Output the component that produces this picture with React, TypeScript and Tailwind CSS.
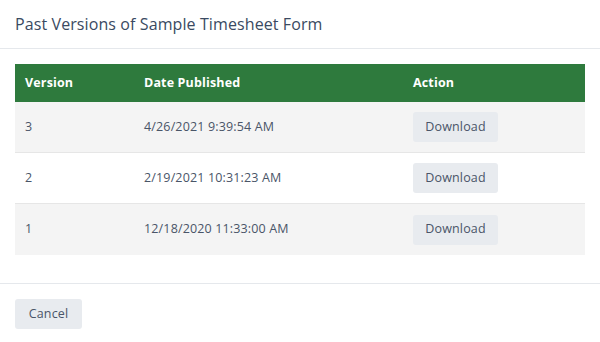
import React from "react";

const rows = [
  { v: "3", d: "4/26/2021 9:39:54 AM", gray: true },
  { v: "2", d: "2/19/2021 10:31:23 AM", gray: false },
  { v: "1", d: "12/18/2020 11:33:00 AM", gray: true },
];

export default function App() {
  return (
    <div
      className="w-[600px] h-[342px] bg-white text-[#4a5568] flex flex-col"
      style={{ fontFamily: "'Open Sans', 'Liberation Sans', sans-serif" }}
    >
      <div className="h-[49px] border-b border-[#e5e8ec] px-[15px] flex items-center">
        <h2 className="text-[16px] text-[#3a4a62] tracking-[0.1px]">Past Versions of Sample Timesheet Form</h2>
      </div>
      <div className="px-[15px] pt-[15px] h-[234px]">
        <div className="flex flex-col text-[12.5px] tracking-[0.15px]">
          <div className="h-[38px] bg-[#2e7a3d] text-white font-bold flex items-center">
            <div className="w-[129px] pl-[10px]">Version</div>
            <div className="w-[269px]">Date Published</div>
            <div>Action</div>
          </div>
          {rows.map((r, i) => (
            <div
              key={r.v}
              className={`h-[51px] flex items-center ${r.gray ? "bg-[#f4f4f4]" : "bg-white"} ${i < 2 ? "border-b border-[#e6e6e6]" : ""}`}
            >
              <div className="w-[129px] pl-[10px]">{r.v}</div>
              <div className="w-[269px]">{r.d}</div>
              <div>
                <button className="h-[30px] w-[85px] rounded-[3px] bg-[#e8ebef] text-[12.5px] text-[#4a5568]">
                  Download
                </button>
              </div>
            </div>
          ))}
        </div>
      </div>
      <div className="border-t border-[#e5e8ec] px-[15px] pt-[15px]">
        <button className="h-[30px] w-[67px] rounded-[3px] bg-[#e8ebef] text-[12.5px] text-[#4a5568] tracking-[0.15px]">Cancel</button>
      </div>
    </div>
  );
}
